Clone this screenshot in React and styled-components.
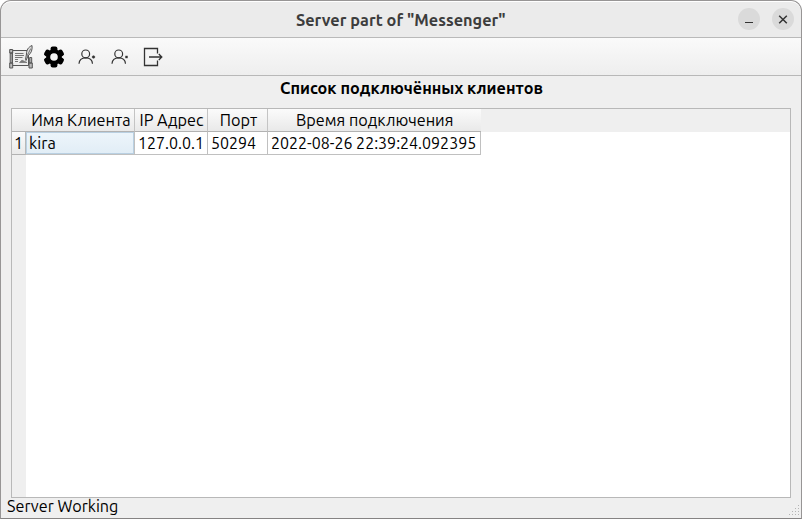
import React from "react";
import styled, { createGlobalStyle } from "styled-components";

const GlobalStyle = createGlobalStyle`
  * { box-sizing: border-box; }
  body {
    margin: 0;
    background: #fff;
    font-family: Ubuntu, "Noto Sans", sans-serif;
    font-size: 16px;
    color: #000;
  }
`;

const Window = styled.main`
  width: 802px;
  height: 519px;
  display: flex;
  flex-direction: column;
  overflow: hidden;
  background: #efefef;
  border: 1px solid #979595;
  border-bottom-color: #858383;
  border-radius: 11px 11px 0 0;
`;

const TitleBar = styled.header`
  height: 37px;
  flex: none;
  display: grid;
  grid-template-columns: 1fr auto 1fr;
  align-items: center;
  background: #ebebeb;
  border-top: 1px solid #fff;
  border-bottom: 1px solid #b9b9b9;
  border-radius: 10px 10px 0 0;
`;

const Label = styled.span`
  display: inline-block;
  white-space: nowrap;
  line-height: 22px;
  font-size: 16px;
  font-weight: ${(p) => (p.$bold ? 700 : 400)};
  color: ${(p) => p.$color || "#000"};
  transform: scaleX(${(p) => p.$stretch || 1});
  transform-origin: ${(p) => p.$origin || "center"};
`;

const WindowControls = styled.div`
  grid-column: 3;
  justify-self: end;
  display: flex;
  gap: 12px;
  padding: 0 7px 1px 0;
`;

const RoundButton = styled.button`
  width: 22px;
  height: 22px;
  padding: 0;
  border: 0;
  border-radius: 50%;
  background: #dadada;
  display: flex;
`;

const ToolBar = styled.nav`
  height: 38px;
  flex: none;
  display: flex;
  align-items: center;
  gap: 9px;
  padding-left: 8px;
  background: linear-gradient(#fafafa, #eeeeee);
  border-bottom: 1px solid #b8b8b8;
`;

const ToolButton = styled.button`
  width: 24px;
  height: 24px;
  padding: 0;
  border: 0;
  background: none;
  display: flex;
`;

const Caption = styled.h1`
  height: 32px;
  flex: none;
  margin: 0 0 0 21px;
  padding-top: 1px;
  font-size: 16px;
  line-height: 22px;
  display: flex;
  justify-content: center;
  align-items: flex-start;
`;

const TableView = styled.section`
  flex: 1;
  margin: 0 10px;
  border: 1px solid #b8b8b8;
  display: grid;
  grid-template-columns: 14px 109px 73px 60px 213px 1fr;
  grid-template-rows: 23px 23px 1fr;
  background: #fff;
`;

const HeaderCell = styled.div`
  display: flex;
  align-items: center;
  justify-content: center;
  padding-left: 1px;
  background: linear-gradient(#fbfbfb, #e9e9e9);
  border-right: 1px solid #c4c4c4;
  border-bottom: 1px solid #b2b2b2;
`;

const EdgeHeaderCell = styled(HeaderCell)`
  padding-left: 0;
  border-right: 0;
`;

const HeaderSpace = styled.div`
  background: #efefef;
`;

const RowNumber = styled(HeaderCell)`
  padding-left: 0;
  border-right-color: #b8b8b8;
`;

const Cell = styled.div`
  display: flex;
  align-items: center;
  padding-left: 3px;
  border-right: 1px solid #c0c0c0;
  border-bottom: 1px solid #c0c0c0;
  background: ${(p) => (p.$selected ? "linear-gradient(#edf5fb, #e1edf6)" : "#fff")};
  box-shadow: ${(p) => (p.$selected ? "inset 0 0 0 1px #b9d0e2" : "none")};
`;

const RowGutter = styled.div`
  grid-column: 1;
  grid-row: 3;
  background: #efefef;
`;

const StatusBar = styled.footer`
  height: 20px;
  flex: none;
  display: flex;
  align-items: flex-start;
  justify-content: space-between;
  padding-left: 6px;
`;

const StatusText = styled.div`
  height: 20px;
  margin-top: -3px;
`;

const GripIcon = styled.svg`
  align-self: flex-end;
  margin: 0 1px 2px 0;
`;

function ScrollIcon() {
  return (
    <svg width="24" height="24" viewBox="0 0 24 24" fill="none" stroke="#555" strokeWidth="1">
      <path fill="#ededed" d="M3.500 5.500H19.500V20.500H3.500z" />
      <path fill="#bbb" d="M.7 4.500h3v3.500h-3zM1.200 8h2v10h-2zM.7 18h3v5h-3zM20 18h3.300v5H20zM20.700 12.500h2v5.500h-2z" />
      <path stroke="#777" d="M6 8.500H14.500M6 10.500H15M6 12.500H13.500M6 14.500H9M6 16.500H9" />
      <path fill="#777" stroke="#777" strokeWidth=".8" d="M10.500 17.500l2.500-2.300 5 2.300z" />
      <path fill="#ddd" d="M16.500 14.500l1-5.500C17.300 5 19.500 2 23 .5c.6 3.800-.7 8-3.800 10L17 15.500z" />
      <path stroke="#777" d="M18 11L21.800 3.500" />
    </svg>
  );
}

function GearIcon() {
  return (
    <svg width="24" height="24" viewBox="0 0 24 24">
      <g fill="#000">
        {[0, 60, 120].map((a) => (
          <rect key={a} x="8.600" y="1.600" width="6.800" height="20.800" rx="2" transform={`rotate(${a} 12 12)`} />
        ))}
        <circle cx="12" cy="12" r="7.800" />
      </g>
      <circle cx="12" cy="12" r="3.800" fill="#f5f5f5" />
    </svg>
  );
}

function UserIcon({ remove }) {
  return (
    <svg width="24" height="24" viewBox="0 0 24 24" fill="none" stroke="#333" strokeWidth="1.200">
      <circle cx="10.700" cy="8.900" r="3.900" />
      <path d="M4 18.800c.2-3.600 2.700-6 6.700-6s6.600 2.400 6.800 6" />
      {remove
        ? <rect x="17.300" y="10.800" width="2.400" height="2.400" fill="#333" stroke="none" />
        : <path d="M18.500 10.400v3.200M16.900 12h3.200" strokeWidth="1.500" />}
    </svg>
  );
}

function ExitIcon() {
  return (
    <svg width="24" height="24" viewBox="0 0 24 24" fill="none" stroke="#333" strokeWidth="1.300">
      <path d="M16.500 8.500V3.500H3.500v17H16.500V15.500" />
      <path d="M8 12H20.800M17.800 9l3 3-3 3" />
    </svg>
  );
}

const gripDots = [[9, 0], [6, 3], [9, 3], [3, 6], [6, 6], [9, 6], [0, 9], [3, 9], [6, 9], [9, 9]];

export default function App() {
  return (
    <>
      <GlobalStyle />
      <Window>
        <TitleBar>
          <span />
          <Label $bold $stretch={1.02} $color="#3d3d3d">Server part of "Messenger"</Label>
          <WindowControls>
            <RoundButton aria-label="Minimize">
              <svg width="22" height="22" stroke="#333"><path d="M7 14.500h8" /></svg>
            </RoundButton>
            <RoundButton aria-label="Close">
              <svg width="22" height="22" stroke="#333" strokeWidth="1.500"><path d="M7.200 7.700l7.600 7.600M14.800 7.700l-7.600 7.600" /></svg>
            </RoundButton>
          </WindowControls>
        </TitleBar>
        <ToolBar>
          <ToolButton aria-label="History"><ScrollIcon /></ToolButton>
          <ToolButton aria-label="Settings"><GearIcon /></ToolButton>
          <ToolButton aria-label="Add user"><UserIcon /></ToolButton>
          <ToolButton aria-label="Remove user"><UserIcon remove /></ToolButton>
          <ToolButton aria-label="Exit"><ExitIcon /></ToolButton>
        </ToolBar>
        <Caption><Label $bold $stretch={1.015}>Список подключённых клиентов</Label></Caption>
        <TableView>
          <EdgeHeaderCell />
          <HeaderCell><Label $stretch={1.015}>Имя Клиента</Label></HeaderCell>
          <HeaderCell><Label $stretch={1.015}>IP Адрес</Label></HeaderCell>
          <HeaderCell><Label $stretch={1.015}>Порт</Label></HeaderCell>
          <EdgeHeaderCell><Label $stretch={1.013}>Время подключения</Label></EdgeHeaderCell>
          <HeaderSpace />
          <RowNumber><Label>1</Label></RowNumber>
          <Cell $selected><Label $origin="left" $stretch={1.02}>kira</Label></Cell>
          <Cell><Label $origin="left">127.0.0.1</Label></Cell>
          <Cell><Label $origin="left">50294</Label></Cell>
          <Cell><Label $origin="left">2022-08-26 22:39:24.092395</Label></Cell>
          <RowGutter />
        </TableView>
        <StatusBar>
          <StatusText><Label $origin="left" $stretch={1.01}>Server Working</Label></StatusText>
          <GripIcon width="11" height="11" fill="#b4b4b4">
            {gripDots.map(([x, y]) => <rect key={`${x}-${y}`} x={x} y={y} width="1" height="1" />)}
          </GripIcon>
        </StatusBar>
      </Window>
    </>
  );
}
